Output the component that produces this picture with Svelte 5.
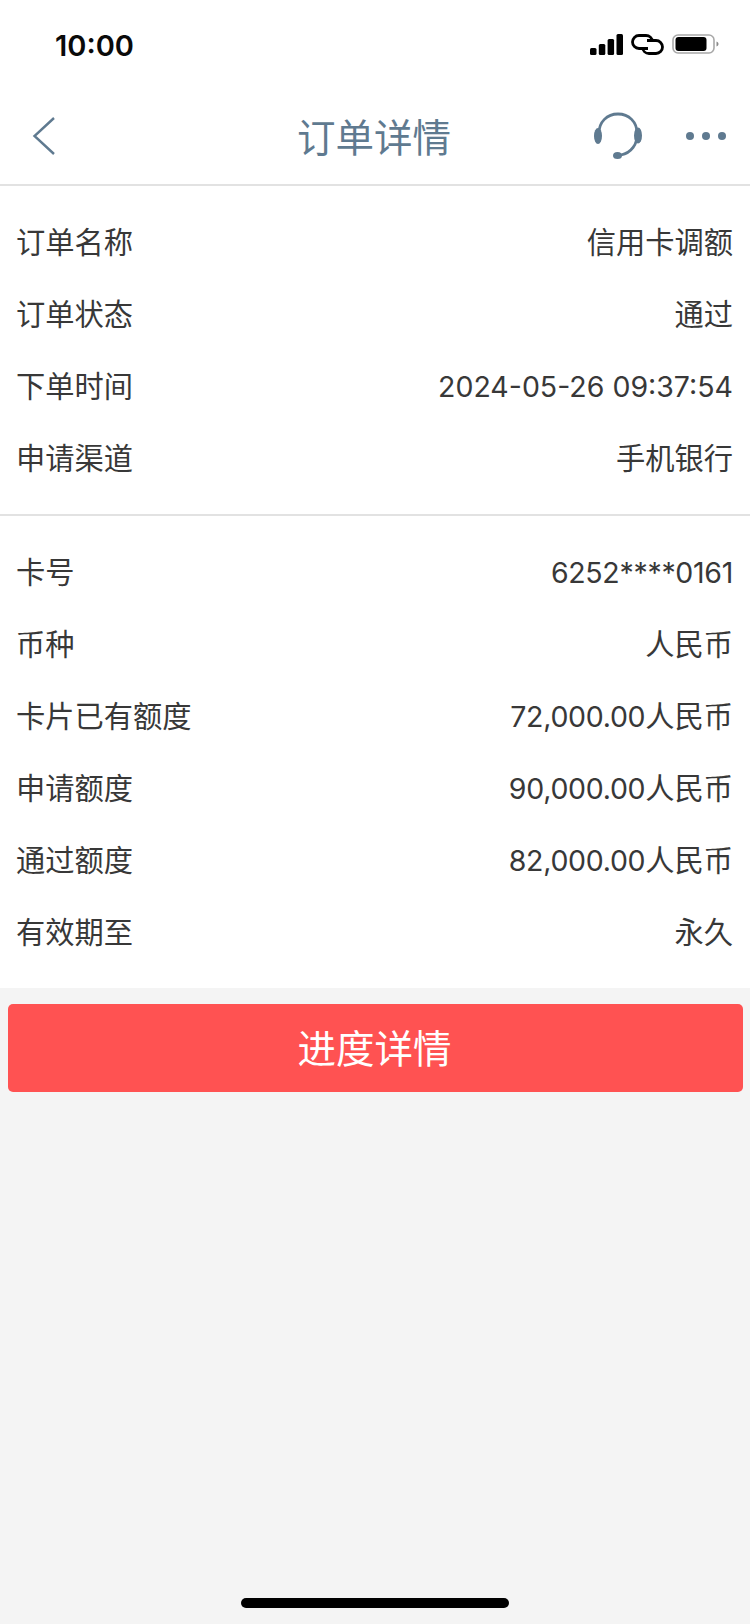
<script>
    const orderRows = [
        { label: '订单名称', value: '信用卡调额' },
        { label: '订单状态', value: '通过' },
        { label: '下单时间', num: '2024-05-26 09:37:54' },
        { label: '申请渠道', value: '手机银行' }
    ];

    const cardRows = [
        { label: '卡号', num: '6252****0161', tight: true },
        { label: '币种', value: '人民币' },
        { label: '卡片已有额度', num: '72,000.00', value: '人民币', tight: true },
        { label: '申请额度', num: '90,000.00', value: '人民币', tight: true },
        { label: '通过额度', num: '82,000.00', value: '人民币', tight: true },
        { label: '有效期至', value: '永久' }
    ];
</script>

{#snippet infoRow(row)}
    <div class="row">
        <span>{row.label}</span>
        <span>{#if row.num}<span class="num" class:tight={row.tight}>{row.num}</span>{/if}{row.value ?? ''}</span>
    </div>
{/snippet}

<div class="page">
    <div class="status-bar">
        <span class="time">10:00</span>
        <div class="status-icons">
            <svg width="33" height="21" viewBox="0 0 33 21" fill="#000">
                <rect x="0" y="14" width="6.500" height="7" rx="1.500" />
                <rect x="8.800" y="10" width="6.500" height="11" rx="1.500" />
                <rect x="17.600" y="5" width="6.500" height="16" rx="1.500" />
                <rect x="26.500" y="0" width="6.500" height="21" rx="1.500" />
            </svg>
            <svg width="33" height="21" viewBox="0 0 33 21" fill="none" stroke="#000" stroke-width="2.800">
                <path d="M17 14.500H8a6.500 6.500 0 0 1 0-13h7a6.500 6.500 0 0 1 6.500 6" />
                <path d="M16 6.500h9a6.500 6.500 0 0 1 0 13h-7a6.500 6.500 0 0 1-6.500-6" />
            </svg>
            <svg width="47" height="20" viewBox="0 0 47 20">
                <rect x="1" y="1" width="41" height="18" rx="5" fill="none" stroke="#a8a8a8" stroke-width="1.600" />
                <rect x="3.500" y="3" width="31" height="14" rx="3" fill="#000" />
                <path d="M44.500 7.500c1.300.4 2 1.300 2 2.500s-.7 2.100-2 2.500z" fill="#8a8a8a" />
            </svg>
        </div>
    </div>

    <header class="nav">
        <svg class="back" width="26" height="40" viewBox="0 0 26 40" fill="none" stroke="#5f7a90" stroke-width="2.400">
            <path d="M23 2 3.500 20 23 38" />
        </svg>
        <h1>订单详情</h1>
        <div class="nav-actions">
            <svg width="48" height="48" viewBox="0 0 48 48" fill="none">
                <path d="M5 21C5 10 13 2 24 2s19 8 19 19c1 11-6 20-16 22" stroke="#5f7a90" stroke-width="2.800" />
                <ellipse cx="4" cy="24" rx="4" ry="8" fill="#5f7a90" />
                <ellipse cx="44" cy="23.500" rx="4" ry="8" fill="#5f7a90" />
                <ellipse cx="23.500" cy="43.500" rx="4.500" ry="3.500" fill="#5f7a90" />
            </svg>
            <div class="dots">
                <span></span><span></span><span></span>
            </div>
        </div>
    </header>

    <section class="group">
        {#each orderRows as row}
            {@render infoRow(row)}
        {/each}
    </section>

    <section class="group">
        {#each cardRows as row}
            {@render infoRow(row)}
        {/each}
    </section>

    <button class="progress">进度详情</button>

    <div class="home-indicator"></div>
</div>

<style>
    :global(body) {
        margin: 0;
        background: #f4f4f4;
    }

    .page {
        position: relative;
        height: 1624px;
        background: #f4f4f4;
        font-family: "Noto Sans CJK SC", "Inter", sans-serif;
        overflow: hidden;
    }

    .status-bar {
        height: 88px;
        background: #fff;
        display: flex;
        justify-content: space-between;
        align-items: center;
        padding: 2px 31px 0 55px;
        box-sizing: border-box;
    }

    .time {
        font-family: "Inter", sans-serif;
        font-size: 29px;
        font-weight: 600;
        color: #0a0a0a;
    }

    .status-icons {
        display: flex;
        align-items: center;
        gap: 8px;
        margin-top: -2px;
    }

    .nav {
        height: 96px;
        background: #fff;
        border-bottom: 2px solid #e2e2e2;
        display: flex;
        align-items: center;
        justify-content: space-between;
        position: relative;
        padding: 0 24px 0 31px;
    }

    .nav h1 {
        position: absolute;
        left: 0;
        right: 0;
        margin: 0;
        padding: 0 2px 2px 0;
        text-align: center;
        font-size: 38.500px;
        font-weight: 400;
        color: #5f7a90;
    }

    .nav-actions {
        display: flex;
        align-items: center;
        gap: 44px;
        position: relative;
    }

    .dots {
        display: flex;
        gap: 8px;
    }

    .dots span {
        width: 8px;
        height: 8px;
        border-radius: 50%;
        background: #5f7a90;
    }

    .group {
        background: #fff;
        padding: 20px 17px 20px 16px;
    }

    .group + .group {
        border-top: 2px solid #e2e2e2;
    }

    .row {
        height: 72px;
        box-sizing: border-box;
        padding-bottom: 4px;
        display: flex;
        justify-content: space-between;
        align-items: center;
        font-size: 29.250px;
        color: #383838;
    }

    .num {
        font-family: "Inter", sans-serif;
        font-size: 28.500px;
    }

    .num.tight {
        letter-spacing: -0.300px;
    }

    .progress {
        display: block;
        width: 735px;
        height: 88px;
        margin: 16px 8px 0;
        border: none;
        border-radius: 5px;
        background: #ff5252;
        color: #fff;
        font-family: inherit;
        font-size: 38.500px;
        padding: 0 2px 4px 0;
    }

    .home-indicator {
        position: absolute;
        left: 241px;
        top: 1598px;
        width: 268px;
        height: 10px;
        border-radius: 5px;
        background: #000;
    }
</style>
